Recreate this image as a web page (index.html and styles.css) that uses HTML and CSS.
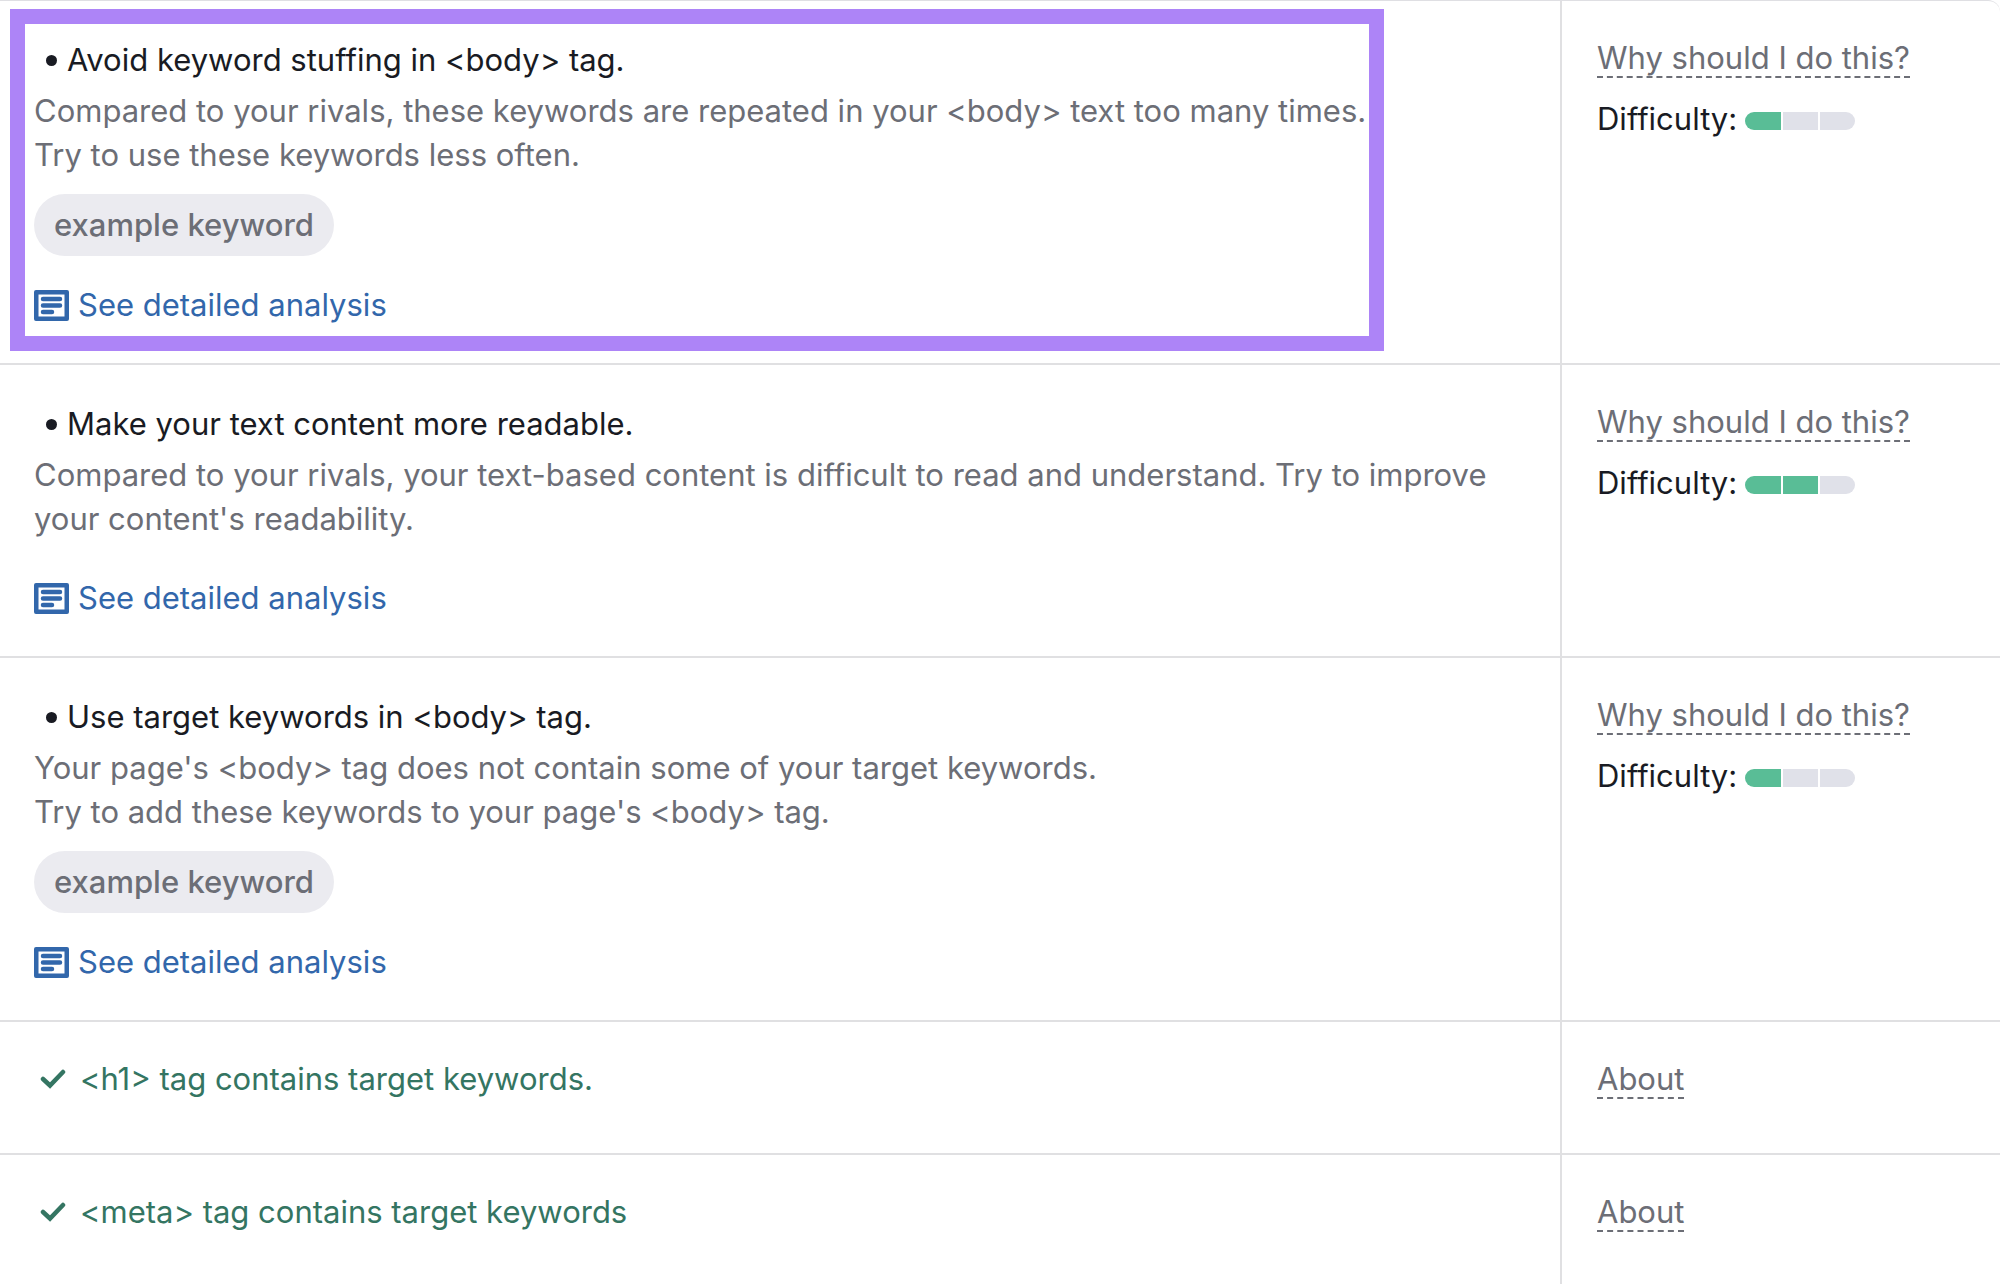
FILE: index.html
```html
<!DOCTYPE html>
<html lang="en">
<head>
    <meta charset="UTF-8">
    <meta name="viewport" content="width=device-width, initial-scale=1.0">
    <title>On-page ideas</title>
    <link rel="stylesheet" href="styles.css">
</head>
<body>
    <svg class="sprite" aria-hidden="true">
        <symbol id="icon-article" viewBox="0 0 35 31">
            <path fill="currentColor" fill-rule="evenodd" d="M2 0h31a2 2 0 0 1 2 2v27a2 2 0 0 1-2 2H2a2 2 0 0 1-2-2V2a2 2 0 0 1 2-2zM4.500 4.500v22h26v-22z"/>
            <path stroke="currentColor" stroke-width="4.500" stroke-linecap="round" d="M9 9h17M9 15.500h17M9 22h9"/>
        </symbol>
        <symbol id="icon-check" viewBox="0 0 26 20">
            <path fill="none" stroke="currentColor" stroke-width="4.500" stroke-linecap="round" stroke-linejoin="miter" d="M3 10l7 6.500L23 3"/>
        </symbol>
    </svg>

    <main class="ideas">
        <section class="idea">
            <div class="idea-main">
                <h2 class="idea-title">Avoid keyword stuffing in &lt;body&gt; tag.</h2>
                <p class="idea-text">Compared to your rivals, these keywords are repeated in your &lt;body&gt; text too many times.<br>Try to use these keywords less often.</p>
                <span class="tag">example keyword</span>
                <a class="details" href="#"><svg class="icon-article"><use href="#icon-article"/></svg>See detailed analysis</a>
                <div class="highlight"></div>
            </div>
            <div class="idea-side">
                <div class="hint"><a class="hint-link" href="#">Why should I do this?</a></div>
                <div class="difficulty">Difficulty: <span class="meter"><i class="on"></i><i></i><i></i></span></div>
            </div>
        </section>

        <section class="idea">
            <div class="idea-main">
                <h2 class="idea-title">Make your text content more readable.</h2>
                <p class="idea-text">Compared to your rivals, your text-based content is difficult to read and understand. Try to improve your content's readability.</p>
                <a class="details" href="#"><svg class="icon-article"><use href="#icon-article"/></svg>See detailed analysis</a>
            </div>
            <div class="idea-side">
                <div class="hint"><a class="hint-link" href="#">Why should I do this?</a></div>
                <div class="difficulty">Difficulty: <span class="meter"><i class="on"></i><i class="on"></i><i></i></span></div>
            </div>
        </section>

        <section class="idea">
            <div class="idea-main">
                <h2 class="idea-title">Use target keywords in &lt;body&gt; tag.</h2>
                <p class="idea-text">Your page's &lt;body&gt; tag does not contain some of your target keywords.<br>Try to add these keywords to your page's &lt;body&gt; tag.</p>
                <span class="tag">example keyword</span>
                <a class="details" href="#"><svg class="icon-article"><use href="#icon-article"/></svg>See detailed analysis</a>
            </div>
            <div class="idea-side">
                <div class="hint"><a class="hint-link" href="#">Why should I do this?</a></div>
                <div class="difficulty">Difficulty: <span class="meter"><i class="on"></i><i></i><i></i></span></div>
            </div>
        </section>

        <section class="idea">
            <div class="idea-main done">
                <p class="done-text"><svg class="icon-check"><use href="#icon-check"/></svg>&lt;h1&gt; tag contains target keywords.</p>
            </div>
            <div class="idea-side">
                <div class="hint"><a class="hint-link" href="#">About</a></div>
            </div>
        </section>

        <section class="idea">
            <div class="idea-main done">
                <p class="done-text"><svg class="icon-check"><use href="#icon-check"/></svg>&lt;meta&gt; tag contains target keywords</p>
            </div>
            <div class="idea-side">
                <div class="hint"><a class="hint-link" href="#">About</a></div>
            </div>
        </section>
    </main>
</body>
</html>
```
FILE: styles.css
```css
* {
    box-sizing: border-box;
}
body {
    margin: 0;
    background-color: #fff;
    color: #191b23;
    font-family: Inter, "Liberation Sans", sans-serif;
    font-size: 31px;
    line-height: 44px;
}
.sprite {
    display: none;
}
.ideas {
    display: flex;
    flex-direction: column;
    min-height: 100vh;
    border-top: 1px solid #dfdfe3;
    border-radius: 0 12px 0 0;
}
.idea {
    display: grid;
    grid-template-columns: 78% 22%;
    border-bottom: 2px solid #e0e0e2;
}
.idea:last-child {
    flex: 1;
    border-bottom: none;
}
.idea-main {
    position: relative;
    display: flex;
    flex-direction: column;
    align-items: flex-start;
    padding: 37px 34px 36px;
}
.idea-main.done {
    padding-top: 35px;
}
.idea-title {
    display: flex;
    align-items: center;
    gap: 10px;
    margin: 0 0 7px;
    padding-left: 12px;
    font-size: 31px;
    font-weight: 400;
}
.idea-title::before {
    content: "";
    width: 11px;
    height: 11px;
    border-radius: 50%;
    background-color: #191b23;
}
.idea-text {
    margin: 0 0 8px;
    color: #6c6e76;
}
.tag {
    margin-top: 9px;
    padding: 9px 20px;
    border-radius: 31px;
    background-color: #ebebf0;
    color: #6c6e76;
    font-weight: 500;
}
.details {
    display: flex;
    align-items: center;
    gap: 9px;
    margin-top: 27px;
    color: #3267ab;
    text-decoration: none;
}
.icon-article {
    width: 35px;
    height: 31px;
}
.highlight {
    position: absolute;
    top: 8px;
    right: 176px;
    bottom: 12px;
    left: 10px;
    border: 15px solid #ad84f7;
    pointer-events: none;
}
.idea-side {
    padding: 35px 35px;
    border-left: 2px solid #e0e0e2;
}
.hint {
    margin-bottom: 17px;
}
.hint-link {
    border-bottom: 2px dashed #6c6e76;
    color: #6c6e76;
    text-decoration: none;
}
.difficulty {
    display: flex;
    align-items: baseline;
    gap: 8px;
}
.meter {
    display: flex;
    gap: 2px;
    width: 110px;
    height: 18px;
    border-radius: 9px;
    overflow: hidden;
}
.meter i {
    flex: 1;
    background-color: #e0e1e9;
}
.meter .on {
    background-color: #59bd96;
}
.done-text {
    display: flex;
    align-items: center;
    gap: 14px;
    margin: 0;
    padding-left: 6px;
    color: #347562;
}
.icon-check {
    width: 26px;
    height: 20px;
}
```
